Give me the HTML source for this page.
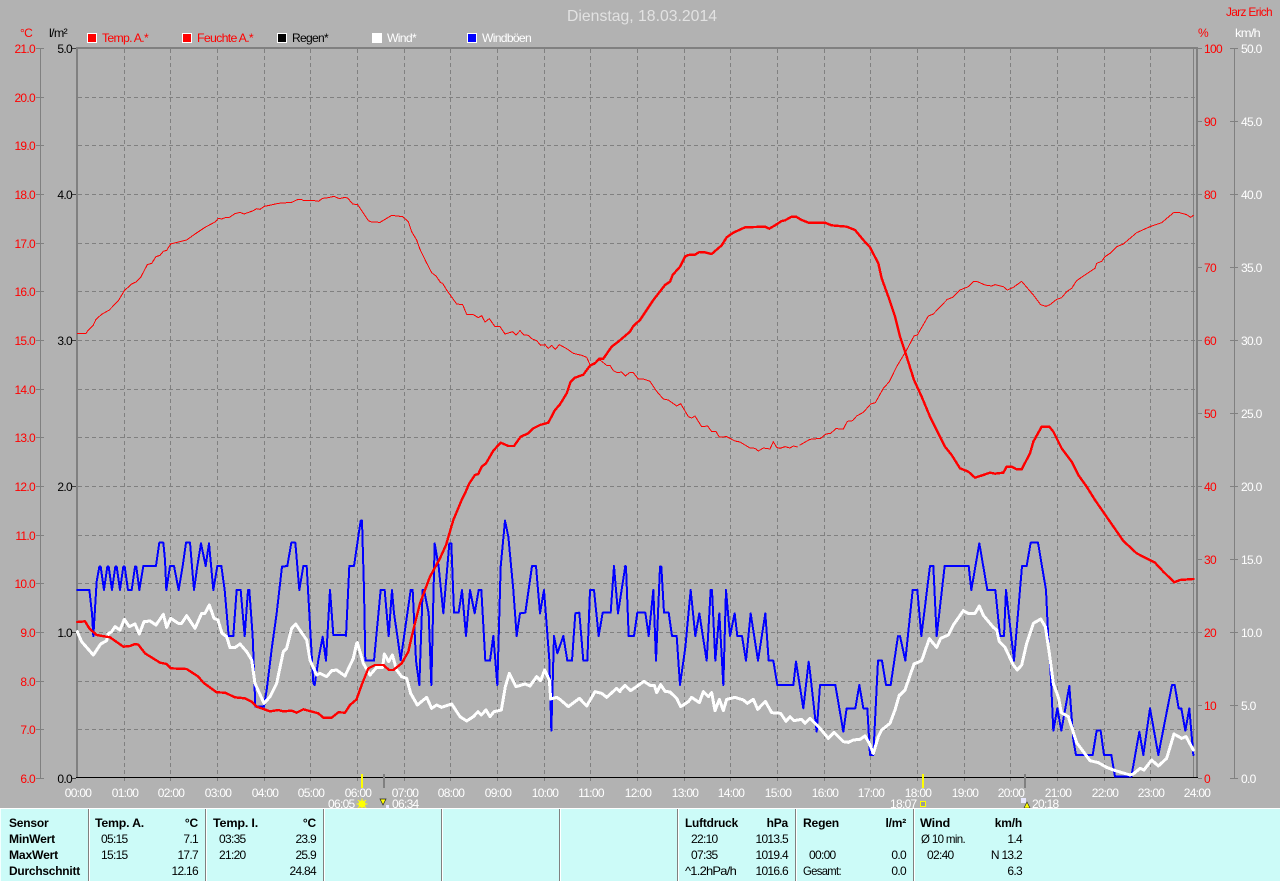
<!DOCTYPE html>
<html lang="de">
<head>
<meta charset="utf-8">
<title>Dienstag, 18.03.2014</title>
<style>
html,body{margin:0;padding:0;background:#b2b2b2;width:1280px;height:881px;overflow:hidden}
svg{position:absolute;left:0;top:0;display:block}
text{font-family:"Liberation Sans",sans-serif;font-size:12px;letter-spacing:-.7px}
.r{fill:#f00}.w{fill:#fff}.k{fill:#000}
.e{text-anchor:end}.m{text-anchor:middle}
.h{font-weight:bold;letter-spacing:-.2px}
.b,.t,.rr,.f{fill:none;stroke-linejoin:round;stroke-linecap:round;vector-effect:non-scaling-stroke;shape-rendering:crispEdges}
.b{stroke:#00f;stroke-width:2}
.t{stroke:#fff;stroke-width:3}
.rr{stroke:#f00;stroke-width:2.4}
.f{stroke:#f00;stroke-width:1}
</style>
</head>
<body>
<svg width="1280" height="881" viewBox="0 0 1280 881" xmlns="http://www.w3.org/2000/svg">
<rect width="1280" height="881" fill="#b2b2b2"/>

<!-- title -->
<text x="567" y="21" textLength="150" lengthAdjust="spacingAndGlyphs" style="font-size:16px;letter-spacing:0;fill:#e2e2e2">Dienstag, 18.03.2014</text>
<text x="1226" y="16" class="r" textLength="46" lengthAdjust="spacingAndGlyphs">Jarz Erich</text>

<!-- unit labels -->
<text x="20" y="37" class="r">°C</text>
<text x="49" y="37" class="k" textLength="18" lengthAdjust="spacingAndGlyphs">l/m²</text>
<text x="1198" y="37" class="r">%</text>
<text x="1235" y="37" class="w" textLength="25" lengthAdjust="spacingAndGlyphs">km/h</text>

<!-- legend -->
<rect x="87.5" y="33.5" width="9" height="9" fill="#f00" stroke="#fff"/>
<text x="102" y="42" class="r" textLength="46" lengthAdjust="spacingAndGlyphs">Temp. A.*</text>
<rect x="182.5" y="33.5" width="9" height="9" fill="#f00" stroke="#fff"/>
<text x="197" y="42" class="r" textLength="56" lengthAdjust="spacingAndGlyphs">Feuchte A.*</text>
<rect x="277.5" y="33.5" width="9" height="9" fill="#000" stroke="#fff"/>
<text x="292" y="42" class="k" textLength="36" lengthAdjust="spacingAndGlyphs">Regen*</text>
<rect x="372.5" y="33.5" width="9" height="9" fill="#fff" stroke="#fff"/>
<text x="387" y="42" class="w" textLength="29" lengthAdjust="spacingAndGlyphs">Wind*</text>
<rect x="467.5" y="33.5" width="9" height="9" fill="#00f" stroke="#fff"/>
<text x="482" y="42" class="w" textLength="49" lengthAdjust="spacingAndGlyphs">Windböen</text>

<!-- grid -->
<path d="M124.5 49V784M170.5 49V784M217.5 49V784M264.5 49V784M310.5 49V784M357.5 49V784M404.5 49V784M450.5 49V784M497.5 49V784M544.5 49V784M590.5 49V784M637.5 49V784M684.5 49V784M730.5 49V784M777.5 49V784M824.5 49V784M870.5 49V784M917.5 49V784M964.5 49V784M1010.5 49V784M1057.5 49V784M1104.5 49V784M1150.5 49V784" stroke="#808080" stroke-dasharray="4 3" fill="none" shape-rendering="crispEdges"/>
<path d="M78 97.5H1196M78 145.5H1196M78 194.5H1196M78 243.5H1196M78 291.5H1196M78 340.5H1196M78 389.5H1196M78 437.5H1196M78 486.5H1196M78 535.5H1196M78 583.5H1196M78 632.5H1196M78 681.5H1196M78 729.5H1196" stroke="#808080" stroke-dasharray="4 3" fill="none" shape-rendering="crispEdges"/>

<!-- frame -->
<rect x="76" y="47" width="1122" height="2" fill="#808080"/>
<rect x="76" y="47" width="2" height="731" fill="#808080"/>
<rect x="1193" y="49" width="1" height="729" fill="#808080"/>
<rect x="1196" y="47" width="2" height="731" fill="#808080"/>
<rect x="76" y="777" width="1122" height="1" fill="#000"/>

<!-- left axis temp -->
<rect x="40" y="48" width="1" height="730" fill="#808080"/>
<path d="M36 48.5H44M36 97.5H44M36 145.5H44M36 194.5H44M36 243.5H44M36 291.5H44M36 340.5H44M36 389.5H44M36 437.5H44M36 486.5H44M36 535.5H44M36 583.5H44M36 632.5H44M36 681.5H44M36 729.5H44M36 778.5H44" stroke="#808080" shape-rendering="crispEdges"/>
<g class="r">
<text x="35" y="53" class="e r">21.0</text><text x="35" y="102" class="e r">20.0</text><text x="35" y="150" class="e r">19.0</text><text x="35" y="199" class="e r">18.0</text><text x="35" y="248" class="e r">17.0</text><text x="35" y="296" class="e r">16.0</text><text x="35" y="345" class="e r">15.0</text><text x="35" y="394" class="e r">14.0</text><text x="35" y="442" class="e r">13.0</text><text x="35" y="491" class="e r">12.0</text><text x="35" y="540" class="e r">11.0</text><text x="35" y="588" class="e r">10.0</text><text x="35" y="637" class="e r">9.0</text><text x="35" y="686" class="e r">8.0</text><text x="35" y="734" class="e r">7.0</text><text x="35" y="783" class="e r">6.0</text>
</g>
<!-- left axis rain -->
<path d="M72 48.5H76M72 194.5H76M72 340.5H76M72 486.5H76M72 632.5H76M72 778.5H76" stroke="#404040" shape-rendering="crispEdges"/>
<text x="72" y="53" class="e k">5.0</text><text x="72" y="199" class="e k">4.0</text><text x="72" y="345" class="e k">3.0</text><text x="72" y="491" class="e k">2.0</text><text x="72" y="637" class="e k">1.0</text><text x="72" y="783" class="e k">0.0</text>

<!-- right axis humidity -->
<path d="M1198 48.5H1202M1198 121.5H1202M1198 194.5H1202M1198 267.5H1202M1198 340.5H1202M1198 413.5H1202M1198 486.5H1202M1198 559.5H1202M1198 632.5H1202M1198 705.5H1202M1198 778.5H1202" stroke="#808080" shape-rendering="crispEdges"/>
<text x="1204" y="53" class="r">100</text><text x="1204" y="126" class="r">90</text><text x="1204" y="199" class="r">80</text><text x="1204" y="272" class="r">70</text><text x="1204" y="345" class="r">60</text><text x="1204" y="418" class="r">50</text><text x="1204" y="491" class="r">40</text><text x="1204" y="564" class="r">30</text><text x="1204" y="637" class="r">20</text><text x="1204" y="710" class="r">10</text><text x="1204" y="783" class="r">0</text>

<!-- right axis wind -->
<rect x="1234" y="48" width="1" height="730" fill="#808080"/>
<path d="M1230 48.5H1238M1230 121.5H1238M1230 194.5H1238M1230 267.5H1238M1230 340.5H1238M1230 413.5H1238M1230 486.5H1238M1230 559.5H1238M1230 632.5H1238M1230 705.5H1238M1230 778.5H1238" stroke="#808080" shape-rendering="crispEdges"/>
<text x="1241" y="53" class="w">50.0</text><text x="1241" y="126" class="w">45.0</text><text x="1241" y="199" class="w">40.0</text><text x="1241" y="272" class="w">35.0</text><text x="1241" y="345" class="w">30.0</text><text x="1241" y="418" class="w">25.0</text><text x="1241" y="491" class="w">20.0</text><text x="1241" y="564" class="w">15.0</text><text x="1241" y="637" class="w">10.0</text><text x="1241" y="710" class="w">5.0</text><text x="1241" y="783" class="w">0.0</text>

<!-- time axis -->
<g style="letter-spacing:-.8px">
<text x="78" y="797" class="m w">00:00</text><text x="125" y="797" class="m w">01:00</text><text x="171" y="797" class="m w">02:00</text><text x="218" y="797" class="m w">03:00</text><text x="265" y="797" class="m w">04:00</text><text x="311" y="797" class="m w">05:00</text><text x="358" y="797" class="m w">06:00</text><text x="405" y="797" class="m w">07:00</text><text x="451" y="797" class="m w">08:00</text><text x="498" y="797" class="m w">09:00</text><text x="545" y="797" class="m w">10:00</text><text x="591" y="797" class="m w">11:00</text><text x="638" y="797" class="m w">12:00</text><text x="685" y="797" class="m w">13:00</text><text x="731" y="797" class="m w">14:00</text><text x="778" y="797" class="m w">15:00</text><text x="825" y="797" class="m w">16:00</text><text x="871" y="797" class="m w">17:00</text><text x="918" y="797" class="m w">18:00</text><text x="965" y="797" class="m w">19:00</text><text x="1011" y="797" class="m w">20:00</text><text x="1058" y="797" class="m w">21:00</text><text x="1105" y="797" class="m w">22:00</text><text x="1151" y="797" class="m w">23:00</text><text x="1197" y="797" class="m w">24:00</text>
</g>

<!-- sun / moon markers -->
<rect x="361" y="774" width="2" height="14" fill="#ff0"/>
<rect x="383" y="774" width="2" height="14" fill="#808080"/>
<rect x="922" y="774" width="2" height="14" fill="#ff0"/>
<rect x="1024" y="774" width="2" height="14" fill="#808080"/>
<text x="328" y="808" class="w">06:05</text>
<circle cx="362" cy="804" r="3.6" fill="#ff0"/>
<path d="M362 798.5V809.5M356.5 804H367.5M358 800L366 808M366 800L358 808" stroke="#ff0" stroke-width="1"/>
<path d="M380 799H386L383 805Z" fill="#ff0" stroke="#222" stroke-width=".7"/>
<rect x="386" y="805" width="3" height="3" fill="#e8e8ff"/>
<text x="392" y="808" class="w">06:34</text>
<text x="890" y="808" class="w">18:07</text>
<rect x="920.5" y="801.5" width="5" height="5" fill="#999" stroke="#ff0"/>
<rect x="1021" y="798" width="5" height="5" fill="#e8e8ff"/>
<path d="M1024 808L1027 802L1030 808Z" fill="#ff0" stroke="#222" stroke-width=".6"/>
<text x="1032" y="808" class="w">20:18</text>

<!-- wind gusts -->
<g transform="translate(70,500) scale(.33333)"><polyline class="b" points="22,270 58,270 66,340 70,408 76,310 80,245 88,200 92,200 102,270 112,200 116,200 126,270 136,200 140,200 150,270 160,200 164,200 174,270 185,270 195,200 199,200 208,270 220,198 258,198 268,128 280,128 285,180 289,270 300,198 312,198 326,270 338,198 348,128 360,128 372,270 382,198 393,130 407,198 417,130 430,270 442,198 454,198 464,270 476,408 490,408 500,270 512,270 524,408 534,270 538,270 548,408 556,620 582,620 590,570 606,440 620,340 636,200 652,198 664,128 676,128 688,270 700,198 710,198 718,340 730,550 734,555 745,480 758,410 768,482 780,270 790,405 828,405"/></g>
<g transform="translate(340,500) scale(.33333)"><polyline class="b" points="18,408 28,198 42,198 62,62 66,62 72,270 76,482 102,482 122,270 134,270 146,408 156,270 162,340 172,408 182,480 212,270 218,270 228,482 238,555 248,270 252,270 266,340 274,555 284,130 296,200 310,340 328,130 334,130 342,338 356,338 366,270 378,408 390,270 404,340 416,270 424,270 436,482 450,482 460,408 472,555 482,200 495,62 505,110 520,270 530,408 540,340 556,338 576,198 588,198 600,340 612,270 628,480 634,692 642,408 652,460 670,408 682,482 696,482 706,340 718,338 730,482 742,482 750,270 762,270 776,408 788,338 812,338 822,198 834,340 856,198"/></g>
<g transform="translate(620,540) scale(.33333)"><polyline class="b" points="14,80 18,80 26,288 42,288 52,218 76,218 86,288 100,150 108,362 120,80 124,80 132,218 146,218 156,288 170,288 180,435 196,322 212,150 226,288 238,220 260,362 272,150 276,150 286,362 298,220 310,435 318,150 330,288 344,220 352,288 366,288 378,362 392,220 414,362 436,220 446,362 460,362 472,435 520,435 528,365 550,505 566,365 570,395 590,575 600,435 646,435 670,575 680,505 706,505 718,435 730,505 742,505 750,645 760,645 774,362 786,362 798,435 812,435 834,288"/></g>
<g transform="translate(900,540) scale(.33333)"><polyline class="b" points="0,288 16,362 38,150 52,150 64,288 90,78 100,78 110,288 134,78 206,78 214,150 238,10 262,150 286,150 300,288 312,288 318,150 342,362 366,78 380,78 392,8 414,8 438,150 446,320 452,400 460,572 472,505 484,572 508,438 520,600 528,645 578,645 590,572 602,572 612,645 634,645 645,710 694,710 718,575 730,645 750,505 775,645 816,435 824,435 836,505 844,505 856,572 868,505 880,645"/></g>

<!-- wind -->
<g transform="translate(70,500) scale(.33333)"><polyline class="t" points="22,395 35,425 70,465 92,432 110,422 114,402 125,395 135,380 150,390 163,358 178,380 195,372 208,402 222,365 240,363 258,375 280,343 290,382 302,355 325,370 335,370 350,347 375,385 395,340 405,340 418,315 432,355 444,360 456,400 470,410 480,443 496,442 510,432 530,455 545,480 555,550 582,610 600,590 620,550 640,455 650,445 665,385 677,372 710,420 720,480 740,525 750,520 770,530 785,512 800,510 825,528 850,475 860,430"/></g>
<g transform="translate(340,500) scale(.33333)"><polyline class="t" points="52,428 70,490 90,525 110,502 128,502 133,462 146,485 157,465 170,510 185,530 200,535 212,580 232,615 260,592 275,625 290,615 305,622 335,612 360,650 380,663 400,650 414,635 424,645 438,630 450,650 462,635 484,630 496,560 508,520 528,560 555,552 570,558 590,530 602,542 614,510 628,540 632,597 650,592 662,600 685,620 718,595 740,618 765,575 785,580 800,592 830,565 840,575"/></g>
<g transform="translate(620,540) scale(.33333)"><polyline class="t" points="0,452 15,436 32,452 72,424 90,436 103,436 110,458 122,434 135,454 150,456 170,475 182,500 205,485 215,472 238,488 250,455 265,470 275,458 285,512 298,478 310,512 320,478 345,472 370,480 382,490 400,478 413,508 436,484 455,518 482,520 498,544 510,530 522,542 545,538 555,550 570,535 600,565 625,595 642,577 670,605 685,607 700,600 720,598 735,588 748,610 760,640 775,590 785,570 810,550 825,510 838,465"/></g>
<g transform="translate(900,540) scale(.33333)"><polyline class="t" points="0,465 15,450 42,372 65,362 88,296 110,322 122,295 145,285 160,255 190,212 204,220 225,220 238,198 250,226 280,262 290,270 298,305 315,322 340,375 352,390 365,375 380,310 400,250 422,237 436,260 448,340 460,430 476,475 484,518 505,530 530,608 570,662 595,668 620,682 640,690 690,705 700,702 720,685 732,690 755,660 775,678 800,655 822,582 845,595 858,590 880,630"/></g>

<!-- temperature -->
<g transform="translate(70,500) scale(.33333)"><polyline class="rr" points="22,366 45,364 58,385 72,398 80,405 120,412 160,440 180,438 195,432 205,434 225,460 270,488 290,492 302,505 350,507 385,530 400,548 440,577 465,578 495,592 525,595 545,605 560,620 600,634 625,630 640,634 665,632 680,638 700,628 745,640 760,653 785,653 805,637 825,638 840,615 860,598"/></g>
<g transform="translate(340,500) scale(.33333)"><polyline class="rr" points="50,597 65,555 85,505 105,495 130,495 147,510 160,510 185,490 205,455 215,410 240,310 270,230 300,175 318,135 340,60 365,0"/></g>
<g transform="translate(440,200) scale(.33333)"><polyline class="rr" points="65,900 75,880 88,850 105,825 115,822 125,800 138,790 160,752 182,728 205,738 222,738 242,710 265,700 280,685 300,675 325,668 345,630 360,613 380,580 392,545 405,533 430,524 450,497 465,490 478,476 490,476 515,440 535,425 570,395 580,378 600,360 640,300 675,255 690,245 698,225 720,200 735,170 745,165 765,164 778,156 795,157 815,162 845,136 860,112 880,98 915,82 975,80 988,86 1005,76 1025,63 1035,61 1055,50 1068,50 1085,60"/></g>
<g transform="translate(800,200) scale(.33333)"><polyline class="rr" points="5,60 25,68 75,68 95,76 140,80 165,90 190,120 210,142 235,190 245,235 265,290 285,350 300,410 320,470 342,540 365,590 390,650 435,740 455,765 480,805 505,815 525,833 550,825 570,818 585,821 610,818 620,800 635,800 650,808 665,808 690,760 700,725 725,680 748,680 760,695 785,745 815,785 835,825 860,860 885,900 968,1020"/></g>
<g transform="translate(900,540) scale(.33333)"><polyline class="rr" points="668,0 680,12 710,40 765,68 790,95 823,127 840,120 880,117"/></g>

<!-- humidity -->
<g transform="translate(70,180) scale(.33333)"><polyline class="f" points="22,460 48,460 55,450 70,435 78,418 95,403 118,390 145,362 163,332 185,312 198,306 212,292 232,254 245,250 258,230 270,226 280,214 290,211 302,192 350,180 375,162 405,142 435,126 445,115 455,117 468,112 478,112 495,101 510,97 522,102 550,92 560,86 570,88 583,79 603,75 625,70 665,67 682,59 695,59 700,61 728,61 745,64 758,55 775,53 792,49 808,56 825,52 833,54 848,72 863,74 895,122 905,126 930,127 945,118 965,106 998,110 1015,125 1025,155 1040,180 1050,208 1068,245 1085,278 1098,288 1110,305"/></g>
<g transform="translate(440,200) scale(.33333)"><polyline class="f" points="0,247 8,250 20,270 50,312 68,314 80,343 100,344 115,353 125,347 135,366 148,356 165,380 180,380 195,402 218,395 228,405 240,392 252,405 265,406 275,416 290,422 302,436 315,434 325,445 335,436 346,448 358,434 380,446 400,460 425,466 440,472 450,494 480,480 500,496 510,496 520,512 532,518 545,516 556,528 570,517 580,518 595,537 610,537 630,544 650,574 670,597 685,600 710,618 722,611 745,650 755,654 765,648 785,680 803,678 815,695 828,695 838,711 860,710 885,723 900,726 930,744 945,745 955,753 970,744 990,747 1000,725 1010,742 1020,745 1035,740 1050,744 1060,738 1072,741"/></g>
<g transform="translate(800,200) scale(.33333)"><polyline class="f" points="0,735 30,718 62,715 78,702 92,700 108,686 130,687 142,664 158,662 170,648 190,637 212,612 226,608 250,565 268,545 290,500 320,450 342,408 352,405 385,348 400,342 442,298 458,292 480,270 505,260 520,245 530,244 555,255 575,258 585,254 610,260 622,270 640,262 665,244 700,285 722,314 738,319 750,314 770,298 785,293 800,275 815,265 830,242 850,228 885,205 890,190 905,184 915,170 930,160 950,140 970,132 1010,98 1050,80 1085,68 1122,37 1135,37 1160,44 1172,52 1180,46"/></g>

<!-- bottom panel -->
<rect x="0" y="808" width="1280" height="1" fill="#fff"/>
<rect x="0" y="809" width="1280" height="72" fill="#ccfbf8"/>
<rect x="0" y="809" width="1" height="72" fill="#f4ffff"/>
<path d="M88.5 809V881M205.5 809V881M323.5 809V881M441.5 809V881M559.5 809V881M677.5 809V881M795.5 809V881M913.5 809V881" stroke="#808080" fill="none" shape-rendering="crispEdges"/>
<path d="M89.5 809V881M206.5 809V881M324.5 809V881M442.5 809V881M560.5 809V881M678.5 809V881M796.5 809V881M914.5 809V881" stroke="#fff" fill="none" shape-rendering="crispEdges"/>

<!-- sensor col -->
<text x="9" y="827" class="h k">Sensor</text>
<text x="9" y="843" class="h k" textLength="46" lengthAdjust="spacingAndGlyphs">MinWert</text>
<text x="9" y="859" class="h k" textLength="49" lengthAdjust="spacingAndGlyphs">MaxWert</text>
<text x="9" y="875" class="h k" textLength="71" lengthAdjust="spacingAndGlyphs">Durchschnitt</text>

<!-- temp a -->
<text x="95" y="827" class="h k" textLength="49" lengthAdjust="spacingAndGlyphs">Temp. A.</text>
<text x="198" y="827" class="h k e">°C</text>
<text x="101" y="843" class="k">05:15</text><text x="198" y="843" class="k e">7.1</text>
<text x="101" y="859" class="k">15:15</text><text x="198" y="859" class="k e">17.7</text>
<text x="198" y="875" class="k e">12.16</text>

<!-- temp i -->
<text x="213" y="827" class="h k" textLength="45" lengthAdjust="spacingAndGlyphs">Temp. I.</text>
<text x="316" y="827" class="h k e">°C</text>
<text x="219" y="843" class="k">03:35</text><text x="316" y="843" class="k e">23.9</text>
<text x="219" y="859" class="k">21:20</text><text x="316" y="859" class="k e">25.9</text>
<text x="316" y="875" class="k e">24.84</text>

<!-- pressure -->
<text x="685" y="827" class="h k" textLength="53" lengthAdjust="spacingAndGlyphs">Luftdruck</text>
<text x="788" y="827" class="h k e">hPa</text>
<text x="691" y="843" class="k">22:10</text><text x="788" y="843" class="k e">1013.5</text>
<text x="691" y="859" class="k">07:35</text><text x="788" y="859" class="k e">1019.4</text>
<text x="685" y="875" class="k" textLength="51" lengthAdjust="spacingAndGlyphs">^1.2hPa/h</text><text x="788" y="875" class="k e">1016.6</text>

<!-- rain -->
<text x="803" y="827" class="h k" textLength="36" lengthAdjust="spacingAndGlyphs">Regen</text>
<text x="906" y="827" class="h k e">l/m²</text>
<text x="809" y="859" class="k">00:00</text><text x="906" y="859" class="k e">0.0</text>
<text x="803" y="875" class="k" textLength="38" lengthAdjust="spacingAndGlyphs">Gesamt:</text><text x="906" y="875" class="k e">0.0</text>

<!-- wind -->
<text x="920" y="827" class="h k" textLength="30" lengthAdjust="spacingAndGlyphs">Wind</text>
<text x="1022" y="827" class="h k e">km/h</text>
<text x="921" y="843" class="k" textLength="44" lengthAdjust="spacingAndGlyphs">Ø 10 min.</text><text x="1022" y="843" class="k e">1.4</text>
<text x="927" y="859" class="k">02:40</text><text x="1022" y="859" class="k e">N 13.2</text>
<text x="1022" y="875" class="k e">6.3</text>
</svg>
</body>
</html>
